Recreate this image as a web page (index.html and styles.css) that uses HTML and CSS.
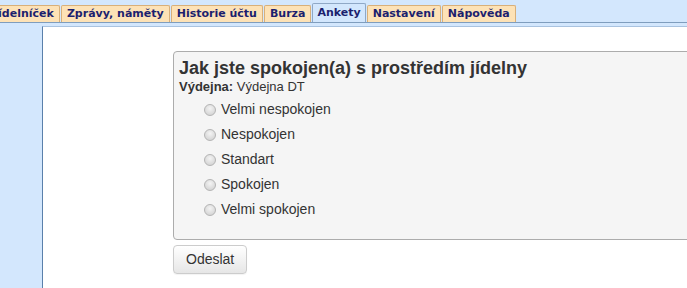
FILE: index.html
```html
<!DOCTYPE html>
<html lang="cs">
<head>
<meta charset="utf-8">
<title>Ankety</title>
<link rel="stylesheet" href="styles.css">
</head>
<body>
<div class="tabs">
  <a class="tab">Jídelníček</a>
  <a class="tab">Zprávy, náměty</a>
  <a class="tab">Historie účtu</a>
  <a class="tab">Burza</a>
  <a class="tab active">Ankety</a>
  <a class="tab">Nastavení</a>
  <a class="tab">Nápověda</a>
</div>
<div class="panel">
  <form class="survey">
    <div class="box">
      <h2 class="title">Jak jste spokojen(a) s prostředím jídelny</h2>
      <div class="meta"><b>Výdejna:</b> Výdejna DT</div>
      <ul class="options">
        <li><label><input type="radio" name="q"> Velmi nespokojen</label></li>
        <li><label><input type="radio" name="q"> Nespokojen</label></li>
        <li><label><input type="radio" name="q"> Standart</label></li>
        <li><label><input type="radio" name="q"> Spokojen</label></li>
        <li><label><input type="radio" name="q"> Velmi spokojen</label></li>
      </ul>
    </div>
    <button type="button" class="btn">Odeslat</button>
  </form>
</div>
</body>
</html>
```
FILE: styles.css
```css
html, body {
  margin: 0;
  padding: 0;
  background: #d3e7fd;
  height: 100%;
  overflow: hidden;
}
body {
  font-family: "Liberation Sans", Arial, sans-serif;
}
.tabs {
  display: flex;
  align-items: flex-end;
  height: 22px;
  border-bottom: 1px solid #7f9dbd;
  margin-left: -12px;
}
.tab {
  display: block;
  font-family: "DejaVu Sans", Verdana, sans-serif;
  font-weight: bold;
  font-size: 11px;
  line-height: 15px;
  height: 16px;
  padding: 0 5px;
  margin-right: 1px;
  color: #1c1f6e;
  background: #fde2b6;
  border: 1px solid #d8b07a;
  border-bottom: none;
  border-radius: 2px 2px 0 0;
}
.tab.active {
  background: #d3e7fd;
  border-color: #8fa8c6;
  height: 18px;
  line-height: 18px;
  padding: 0 4px;
}
.panel {
  margin: 3px 0 0 42px;
  background: #fff;
  border-left: 1px solid #5a80ab;
  border-top: 1px solid #a9c3e0;
  height: 300px;
  padding: 24px 0 0 130px;
}
.survey {
  display: flex;
  flex-direction: column;
  align-items: flex-start;
}
.box {
  align-self: stretch;
  margin-right: -40px;
  background: #f5f5f5;
  border: 1px solid #acacac;
  border-radius: 4px;
  padding: 5px 5px 17px 5px;
  color: #333;
}
.title {
  margin: 0;
  font-size: 18px;
  line-height: 22px;
  font-weight: bold;
  color: #333;
}
.meta {
  font-size: 13px;
  line-height: 15px;
  color: #333;
}
.meta b {
  font-weight: bold;
}
.options {
  list-style: none;
  margin: 3px 0 0 0;
  padding: 0 0 0 25px;
}
.options li {
  height: 25px;
  font-size: 14px;
  line-height: 25px;
}
.options label {
  display: flex;
  align-items: center;
  gap: 5px;
}
.options input {
  -webkit-appearance: none;
  appearance: none;
  width: 12px;
  height: 12px;
  margin: 1px 0 0 0;
  border-radius: 50%;
  border: 1px solid #b4b4b4;
  background: radial-gradient(circle at 50% 35%, #f4f4f4 0%, #dcdcdc 60%, #cfcfcf 100%);
}
.btn {
  margin-top: 5px;
  font-family: "Liberation Sans", Arial, sans-serif;
  font-size: 14px;
  line-height: 19px;
  padding: 4px 12px;
  color: #333;
  background: linear-gradient(#ffffff, #e6e6e6);
  border: 1px solid #cccccc;
  border-radius: 4px;
  box-shadow: 0 1px 1px rgba(0,0,0,0.05);
}
```
